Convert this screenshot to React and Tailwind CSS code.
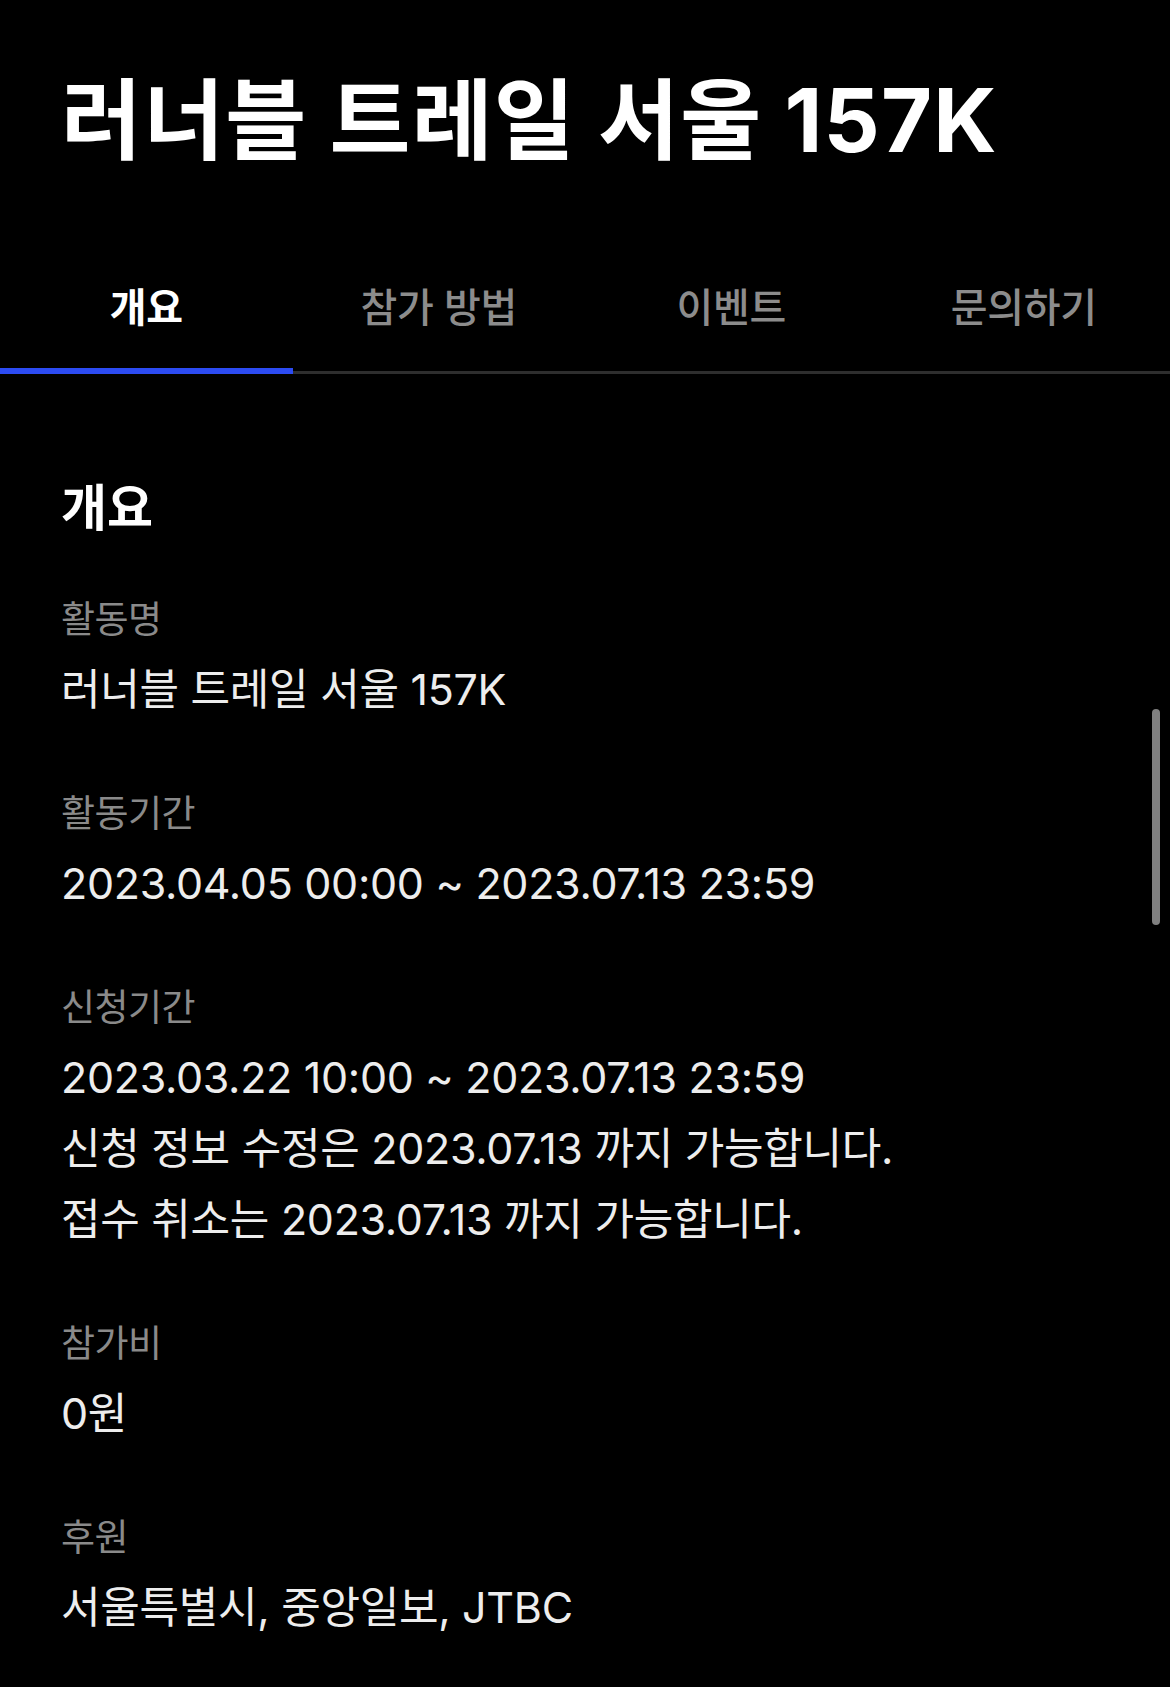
import React from "react";

const font = { fontFamily: '"Inter", "Noto Sans CJK KR", sans-serif' };

function Field({ label, lines }) {
  return (
    <div className="flex flex-col">
      <div className="text-[37px] leading-[68px] text-[#8a8a8a] tracking-[-0.5px]">{label}</div>
      {lines.map((l, i) => (
        <div key={i} className="text-[43px] leading-[71px] text-[#ededed] tracking-[-0.3px]">
          {l}
        </div>
      ))}
    </div>
  );
}

export default function App() {
  const tabs = ["개요", "참가 방법", "이벤트", "문의하기"];
  return (
    <div className="relative min-h-[1687px] w-full bg-black overflow-hidden" style={font}>
      <h1 className="pl-[61px] pt-[70px] text-[88px] font-bold leading-[100px] text-white tracking-[1.2px]">
        러너블 트레일 서울 157K
      </h1>

      <div className="mt-[100px] relative">
        <div className="grid grid-cols-4">
          {tabs.map((t, i) => (
            <div key={t} className="flex flex-col items-center">
              <div
                className={
                  "h-[98px] pb-[22px] flex items-center text-[40px] tracking-[-0.3px] " +
                  (i === 0 ? "text-white font-bold" : "text-[#8c8c8c] font-medium")
                }
              >
                {t}
              </div>
              <div className={"w-full h-[6px] " + (i === 0 ? "bg-[#2c4bf2]" : "bg-transparent")} />
            </div>
          ))}
        </div>
        <div className="absolute left-[293px] right-0 bottom-0 h-[3px] bg-[#2e2e2e]" />
      </div>

      <div className="px-[61px] pt-[104px] flex flex-col gap-[55px]">
        <h2 className="text-[50px] font-bold text-white leading-[60px] mb-[-7px]">개요</h2>
        <Field label="활동명" lines={["러너블 트레일 서울 157K"]} />
        <Field label="활동기간" lines={["2023.04.05 00:00 ~ 2023.07.13 23:59"]} />
        <Field
          label="신청기간"
          lines={[
            "2023.03.22 10:00 ~ 2023.07.13 23:59",
            "신청 정보 수정은 2023.07.13 까지 가능합니다.",
            "접수 취소는 2023.07.13 까지 가능합니다.",
          ]}
        />
        <Field label="참가비" lines={["0원"]} />
        <Field label="후원" lines={["서울특별시, 중앙일보, JTBC"]} />
      </div>

      <div className="absolute left-[1152px] top-[709px] w-[8px] h-[216px] rounded-full bg-[#808080]" />
    </div>
  );
}
